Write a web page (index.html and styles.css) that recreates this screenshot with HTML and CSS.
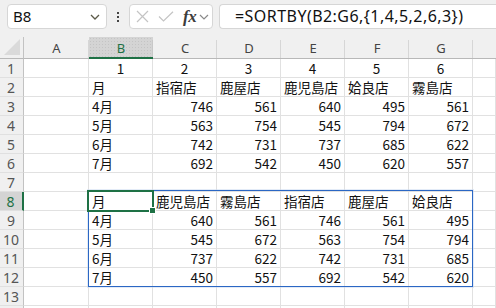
FILE: index.html
```html
<!DOCTYPE html>
<html lang="ja">
<head>
<meta charset="utf-8">
<link rel="stylesheet" href="styles.css">
</head>
<body>
<div class="toolbar">
  <div class="namebox">
    <span class="namebox-text">B8</span>
    <svg class="chev" width="10" height="6" viewBox="0 0 10 6"><path d="M1 1 L5 5 L9 1" fill="none" stroke="#5b5a48" stroke-width="1.3"/></svg>
  </div>
  <div class="kebab"><i></i><i></i><i></i></div>
  <div class="fxbox">
    <svg width="13" height="13" viewBox="0 0 13 13"><path d="M1 1 L12 12 M12 1 L1 12" stroke="#c4c4c4" stroke-width="1.2" fill="none"/></svg>
    <svg class="check" width="16" height="11" viewBox="0 0 16 11"><path d="M1 5.5 L5.5 10 L15 0.8" stroke="#c4c4c4" stroke-width="1.2" fill="none"/></svg>
    <span class="fx">fx</span>
    <svg class="fxchev" width="10" height="6" viewBox="0 0 10 6"><path d="M1 1 L5 5 L9 1" fill="none" stroke="#8a8a8a" stroke-width="1.2"/></svg>
  </div>
  <div class="formula">=SORTBY(B2:G6,{1,4,5,2,6,3})</div>
</div>

<div class="sheet">
  <div class="grid">
    <div class="corner"><span class="tri"></span></div>
    <div class="ch">A</div><div class="ch sel">B</div><div class="ch">C</div><div class="ch">D</div><div class="ch">E</div><div class="ch">F</div><div class="ch">G</div><div class="ch last"></div>

    <div class="rh">1</div><div class="c"></div><div class="c ctr">1</div><div class="c ctr">2</div><div class="c ctr">3</div><div class="c ctr">4</div><div class="c ctr">5</div><div class="c ctr">6</div><div class="c"></div>
    <div class="rh">2</div><div class="c"></div><div class="c">月</div><div class="c">指宿店</div><div class="c">鹿屋店</div><div class="c">鹿児島店</div><div class="c">姶良店</div><div class="c">霧島店</div><div class="c"></div>
    <div class="rh">3</div><div class="c"></div><div class="c">4月</div><div class="c n">746</div><div class="c n">561</div><div class="c n">640</div><div class="c n">495</div><div class="c n">561</div><div class="c"></div>
    <div class="rh">4</div><div class="c"></div><div class="c">5月</div><div class="c n">563</div><div class="c n">754</div><div class="c n">545</div><div class="c n">794</div><div class="c n">672</div><div class="c"></div>
    <div class="rh">5</div><div class="c"></div><div class="c">6月</div><div class="c n">742</div><div class="c n">731</div><div class="c n">737</div><div class="c n">685</div><div class="c n">622</div><div class="c"></div>
    <div class="rh">6</div><div class="c"></div><div class="c">7月</div><div class="c n">692</div><div class="c n">542</div><div class="c n">450</div><div class="c n">620</div><div class="c n">557</div><div class="c"></div>
    <div class="rh">7</div><div class="c"></div><div class="c"></div><div class="c"></div><div class="c"></div><div class="c"></div><div class="c"></div><div class="c"></div><div class="c"></div>
    <div class="rh selr">8</div><div class="c"></div><div class="c">月</div><div class="c">鹿児島店</div><div class="c">霧島店</div><div class="c">指宿店</div><div class="c">鹿屋店</div><div class="c">姶良店</div><div class="c"></div>
    <div class="rh">9</div><div class="c"></div><div class="c">4月</div><div class="c n">640</div><div class="c n">561</div><div class="c n">746</div><div class="c n">561</div><div class="c n">495</div><div class="c"></div>
    <div class="rh">10</div><div class="c"></div><div class="c">5月</div><div class="c n">545</div><div class="c n">672</div><div class="c n">563</div><div class="c n">754</div><div class="c n">794</div><div class="c"></div>
    <div class="rh">11</div><div class="c"></div><div class="c">6月</div><div class="c n">737</div><div class="c n">622</div><div class="c n">742</div><div class="c n">731</div><div class="c n">685</div><div class="c"></div>
    <div class="rh">12</div><div class="c"></div><div class="c">7月</div><div class="c n">450</div><div class="c n">557</div><div class="c n">692</div><div class="c n">542</div><div class="c n">620</div><div class="c"></div>
    <div class="rh">13</div><div class="c"></div><div class="c"></div><div class="c"></div><div class="c"></div><div class="c"></div><div class="c"></div><div class="c"></div><div class="c"></div>
    <div class="rh"></div><div class="c"></div><div class="c"></div><div class="c"></div><div class="c"></div><div class="c"></div><div class="c"></div><div class="c"></div><div class="c"></div>
  </div>
  <div class="spill"></div>
  <div class="active"><span class="handle"></span></div>
</div>
</body>
</html>
```

FILE: styles.css
```css
html, body {
  margin: 0;
  padding: 0;
  background: #f0f0f0;
  overflow: hidden;
  width: 496px;
  height: 308px;
}

.toolbar {
  height: 37px;
  box-sizing: border-box;
  padding: 4px 0 0 7px;
  display: flex;
  align-items: flex-start;
  font-family: "Noto Sans", "Liberation Sans", sans-serif;
}

.namebox {
  width: 100px;
  height: 25px;
  box-sizing: border-box;
  background: #fff;
  border: 1px solid #d6d6d6;
  border-radius: 4px;
  display: flex;
  align-items: center;
  justify-content: space-between;
  padding: 0 6px 0 5px;
}

.namebox-text {
  font-size: 15px;
  color: #111;
  line-height: 23px;
}

.chev { margin-top: 1px; }

.kebab {
  width: 22px;
  height: 25px;
  display: flex;
  flex-direction: column;
  align-items: center;
  justify-content: center;
  gap: 2px;
}

.kebab i {
  display: block;
  width: 2px;
  height: 2px;
  background: #444;
}

.fxbox {
  width: 84px;
  height: 25px;
  box-sizing: border-box;
  background: #fff;
  border: 1px solid #d6d6d6;
  border-radius: 4px;
  display: flex;
  align-items: center;
  padding-left: 6px;
}

.check { margin-left: 9px; }

.fx {
  font-family: "Liberation Serif", serif;
  font-style: italic;
  font-weight: bold;
  font-size: 17px;
  color: #3c3c3c;
  margin-left: 9px;
  line-height: 23px;
  letter-spacing: -0.5px;
}

.fxchev { margin-left: 3px; margin-top: 1px; }

.formula {
  margin-left: 6px;
  flex: 1;
  height: 25px;
  box-sizing: border-box;
  background: #fff;
  border: 1px solid #d6d6d6;
  border-right: none;
  border-radius: 4px 0 0 4px;
  padding-left: 15px;
  font-size: 16px;
  line-height: 23px;
  color: #111;
  letter-spacing: 0.45px;
  white-space: nowrap;
}

.sheet {
  position: relative;
}

.grid {
  display: grid;
  grid-template-columns: 24px 65px 64px 64px 64px 64px 64px 64px 1fr;
  grid-template-rows: 22px repeat(14, 19px);
  background: #fff;
  font-family: "Noto Sans CJK JP", "Noto Sans", sans-serif;
}

.corner {
  background: #f0f0f0;
  border-right: 1px solid #c2c2c2;
  border-bottom: 1px solid #b8b8b8;
  position: relative;
}

.tri {
  position: absolute;
  right: 3px;
  bottom: 3px;
  width: 0;
  height: 0;
  border-left: 16px solid transparent;
  border-bottom: 16px solid #dadada;
}

.ch {
  background: #f0f0f0;
  border-bottom: 1px solid #b8b8b8;
  font-family: "Noto Sans", "Liberation Sans", sans-serif;
  font-size: 13px;
  color: #444;
  display: flex;
  align-items: center;
  justify-content: center;
  position: relative;
  padding-top: 1px;
}

.ch::after {
  content: "";
  position: absolute;
  right: 0;
  top: 3px;
  bottom: 0;
  width: 1px;
  background: #d6d6d6;
}

.ch.last::after { display: none; }

.ch.sel {
  background-color: #d4d4d4;
  background-image: radial-gradient(#c4c4c4 0.6px, transparent 0.8px);
  background-size: 3px 3px;
  color: #1e7145;
  border-bottom: 2px solid #1e7145;
}

.ch.sel::after { background: #c8c8c8; }

.rh {
  background: #f0f0f0;
  border-right: 1px solid #c2c2c2;
  border-bottom: 1px solid #e0e0e0;
  font-family: "Noto Sans", "Liberation Sans", sans-serif;
  font-size: 14px;
  color: #555;
  display: flex;
  align-items: center;
  justify-content: center;
  padding-right: 1px;
}

.rh.selr {
  background: #d4d4d4;
  color: #1e7145;
  border-right: 2px solid #1e7145;
}

.c {
  border-right: 1px solid #e1e1e1;
  border-bottom: 1px solid #e1e1e1;
  font-size: 13.5px;
  line-height: 18px;
  color: #111;
  padding: 0 3px;
  white-space: nowrap;
  overflow: hidden;
}

.c.n { text-align: right; }
.c.ctr { text-align: center; }

.spill {
  position: absolute;
  left: 88px;
  top: 153px;
  width: 385px;
  height: 97px;
  box-sizing: border-box;
  border: 1px solid #2b67c4;
  box-shadow: 0 0 0 1px rgba(200, 215, 240, 0.5);
  pointer-events: none;
}

.active {
  position: absolute;
  left: 87px;
  top: 153px;
  width: 67px;
  height: 22px;
  box-sizing: border-box;
  border: 2px solid #1e7145;
}

.handle {
  position: absolute;
  right: -4px;
  bottom: -4px;
  width: 5px;
  height: 5px;
  background: #1e7145;
  border: 1px solid #fff;
}
```
